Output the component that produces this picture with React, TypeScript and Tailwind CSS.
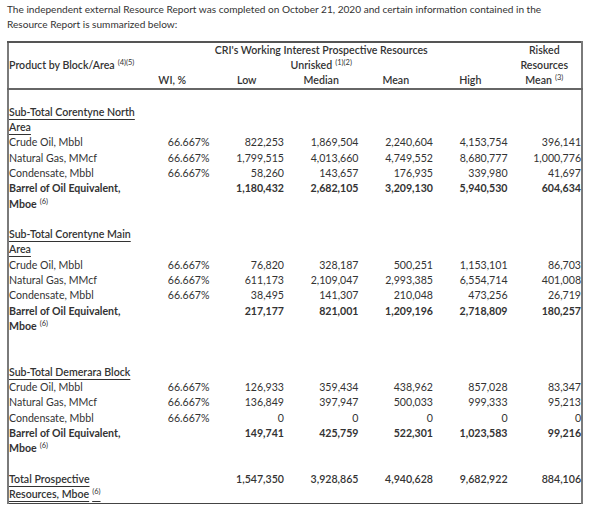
const rowCls = "leading-[15.3px]"

function Sup({ children }: { children: React.ReactNode }) {
  return <span className="relative -top-[4px] ml-[3px] text-[7.5px] font-normal leading-none">{children}</span>
}

function Blank() {
  return (
    <tr className={rowCls}>
      <td colSpan={7} className="h-[15.3px] p-0"></td>
    </tr>
  )
}

function Heading({ lines }: { lines: string[] }) {
  return (
    <tr className={rowCls}>
      <td className="p-0 align-top font-semibold underline underline-offset-[3px] whitespace-nowrap">
        {lines.map((l, i) => (
          <div key={i}>{l}</div>
        ))}
      </td>
      <td colSpan={6} className="p-0"></td>
    </tr>
  )
}

function DataRow({ label, wi, vals }: { label: string; wi: string; vals: string[] }) {
  return (
    <tr className={rowCls}>
      <td className="p-0 whitespace-nowrap">{label}</td>
      <td className="p-0 text-right">{wi}</td>
      {vals.map((v, i) => (
        <td key={i} className="p-0 text-right">
          {v}
        </td>
      ))}
    </tr>
  )
}

function BoeRow({ vals }: { vals: string[] }) {
  return (
    <>
      <tr className={rowCls}>
        <td className="p-0 font-bold whitespace-nowrap">Barrel of Oil Equivalent,</td>
        <td className="p-0"></td>
        {vals.map((v, i) => (
          <td key={i} className="p-0 text-right font-bold">
            {v}
          </td>
        ))}
      </tr>
      <tr className={rowCls}>
        <td className="p-0 font-bold whitespace-nowrap">
          Mboe<Sup>(6)</Sup>
        </td>
        <td colSpan={6} className="p-0"></td>
      </tr>
    </>
  )
}

const sections = [
  {
    title: ["Sub-Total Corentyne North", "Area"],
    rows: [
      ["Crude Oil, Mbbl", "66.667%", ["822,253", "1,869,504", "2,240,604", "4,153,754", "396,141"]],
      ["Natural Gas, MMcf", "66.667%", ["1,799,515", "4,013,660", "4,749,552", "8,680,777", "1,000,776"]],
      ["Condensate, Mbbl", "66.667%", ["58,260", "143,657", "176,935", "339,980", "41,697"]],
    ],
    boe: ["1,180,432", "2,682,105", "3,209,130", "5,940,530", "604,634"],
    gap: 1,
  },
  {
    title: ["Sub-Total Corentyne Main", "Area"],
    rows: [
      ["Crude Oil, Mbbl", "66.667%", ["76,820", "328,187", "500,251", "1,153,101", "86,703"]],
      ["Natural Gas, MMcf", "66.667%", ["611,173", "2,109,047", "2,993,385", "6,554,714", "401,008"]],
      ["Condensate, Mbbl", "66.667%", ["38,495", "141,307", "210,048", "473,256", "26,719"]],
    ],
    boe: ["217,177", "821,001", "1,209,196", "2,718,809", "180,257"],
    gap: 2,
  },
  {
    title: ["Sub-Total Demerara Block"],
    rows: [
      ["Crude Oil, Mbbl", "66.667%", ["126,933", "359,434", "438,962", "857,028", "83,347"]],
      ["Natural Gas, MMcf", "66.667%", ["136,849", "397,947", "500,033", "999,333", "95,213"]],
      ["Condensate, Mbbl", "66.667%", ["0", "0", "0", "0", "0"]],
    ],
    boe: ["149,741", "425,759", "522,301", "1,023,583", "99,216"],
    gap: 1,
  },
] as const

function SectionRows({ s }: { s: (typeof sections)[number] }) {
  return (
    <>
      <Heading lines={[...s.title]} />
      {s.rows.map((r, i) => (
        <DataRow key={i} label={r[0]} wi={r[1]} vals={[...r[2]]} />
      ))}
      <BoeRow vals={[...s.boe]} />
      {Array.from({ length: s.gap }).map((_, i) => (
        <Blank key={i} />
      ))}
    </>
  )
}

export default function App() {
  return (
    <div className="w-[600px] h-[515px] bg-white text-[#333] text-[10.6px] font-['Lato',sans-serif] pt-[2px]">
      <p className="pl-[7px] leading-[15.3px] text-[10.1px] whitespace-nowrap">
        The independent external Resource Report was completed on October 21, 2020 and certain information contained in the
        <br />
        Resource Report is summarized below:
      </p>

      <table className="ml-[7px] mt-[8px] w-[576px] table-fixed border-collapse border-x-2 border-x-[#7a7a7a] border-t-2 border-t-[#555] border-b border-b-[#444]">
        <colgroup>
          <col className="w-[127px]" />
          <col className="w-[74.5px]" />
          <col className="w-[74.5px]" />
          <col className="w-[74.5px]" />
          <col className="w-[74.5px]" />
          <col className="w-[74.5px]" />
          <col className="w-[74.5px]" />
        </colgroup>
        <thead className="font-semibold border-b-2 border-b-[#666]">
          <tr className={rowCls}>
            <td className="p-0"></td>
            <td colSpan={5} className="p-0 text-center">
              CRI's Working Interest Prospective Resources
            </td>
            <td className="p-0 text-center">Risked</td>
          </tr>
          <tr className={rowCls}>
            <td className="p-0 whitespace-nowrap">
              Product by Block/Area<Sup>(4)(5)</Sup>
            </td>
            <td colSpan={5} className="p-0 text-center">
              Unrisked<Sup>(1)(2)</Sup>
            </td>
            <td className="p-0 text-center">Resources</td>
          </tr>
          <tr className={rowCls}>
            <td className="p-0"></td>
            <td className="p-0 text-center">WI, %</td>
            <td className="p-0 text-center">Low</td>
            <td className="p-0 text-center">Median</td>
            <td className="p-0 text-center">Mean</td>
            <td className="p-0 text-center">High</td>
            <td className="p-0 text-center whitespace-nowrap">
              Mean<Sup>(3)</Sup>
            </td>
          </tr>
        </thead>
        <tbody>
          <Blank />
          {sections.map((s, si) => (
            <SectionRows key={si} s={s} />
          ))}
          <tr className={rowCls}>
            <td className="p-0 font-semibold underline underline-offset-[3px] align-top whitespace-nowrap">
              <div>Total Prospective</div>
              <div>
                Resources, Mboe<Sup>(6)</Sup>
              </div>
            </td>
            <td className="p-0"></td>
            {["1,547,350", "3,928,865", "4,940,628", "9,682,922", "884,106"].map((v, i) => (
              <td key={i} className="p-0 text-right align-top font-semibold">
                {v}
              </td>
            ))}
          </tr>
        </tbody>
      </table>
    </div>
  )
}
